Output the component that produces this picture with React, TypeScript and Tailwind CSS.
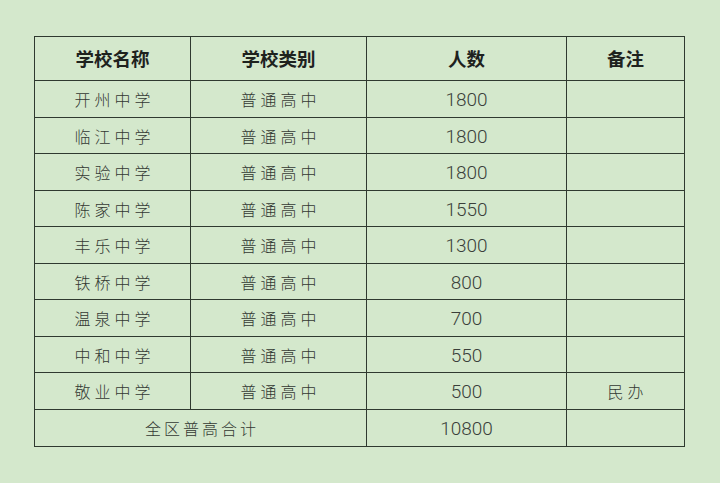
import React from "react";

const rows: [string, string, string, string][] = [
  ["开州中学", "普通高中", "1800", ""],
  ["临江中学", "普通高中", "1800", ""],
  ["实验中学", "普通高中", "1800", ""],
  ["陈家中学", "普通高中", "1550", ""],
  ["丰乐中学", "普通高中", "1300", ""],
  ["铁桥中学", "普通高中", "800", ""],
  ["温泉中学", "普通高中", "700", ""],
  ["中和中学", "普通高中", "550", ""],
  ["敬业中学", "普通高中", "500", "民办"],
];

const cjk = { fontFamily: '"Noto Sans CJK SC", sans-serif' };
const num = { fontFamily: 'Roboto, "Liberation Sans", sans-serif' };

export default function App() {
  return (
    <div className="w-[720px] h-[483px] bg-[#d4e8cc] pt-[36px] pl-[34px] overflow-hidden">
      <table className="border-collapse table-fixed w-[650px]">
        <colgroup>
          <col className="w-[156px]" />
          <col className="w-[176px]" />
          <col className="w-[200px]" />
          <col className="w-[118px]" />
        </colgroup>
        <thead>
          <tr className="h-[44px]">
            {["学校名称", "学校类别", "人数", "备注"].map((h) => (
              <th
                key={h}
                style={cjk}
                className="border-[1.5px] border-[#2f392f] text-center text-[18.5px] font-bold text-[#1e221e] p-0"
              >
                {h}
              </th>
            ))}
          </tr>
        </thead>
        <tbody>
          {rows.map((r, i) => (
            <tr key={i} className={i % 2 === 0 ? "h-[37px]" : "h-[36px]"}>
              <td style={cjk} className="border-[1.5px] border-[#2f392f] text-center text-[16px] font-light tracking-[4px] pl-[4px] text-[#333833] p-0">
                {r[0]}
              </td>
              <td style={cjk} className="border-[1.5px] border-[#2f392f] text-center text-[16px] font-light tracking-[4px] pl-[4px] text-[#333833] p-0">
                {r[1]}
              </td>
              <td style={num} className="border-[1.5px] border-[#2f392f] text-center text-[19px] font-light text-[#3a3f3a] p-0 pt-[3px]">
                {r[2]}
              </td>
              <td style={cjk} className="border-[1.5px] border-[#2f392f] text-center text-[16px] font-light tracking-[4px] pl-[4px] text-[#333833] p-0">
                {r[3]}
              </td>
            </tr>
          ))}
          <tr className="h-[37px]">
            <td colSpan={2} style={cjk} className="border-[1.5px] border-[#2f392f] text-center text-[16px] font-light tracking-[3px] pl-[3px] text-[#333833] p-0">
              全区普高合计
            </td>
            <td style={num} className="border-[1.5px] border-[#2f392f] text-center text-[19px] font-light text-[#3a3f3a] p-0 pt-[3px]">
              10800
            </td>
            <td className="border-[1.5px] border-[#2f392f] p-0"></td>
          </tr>
        </tbody>
      </table>
    </div>
  );
}
